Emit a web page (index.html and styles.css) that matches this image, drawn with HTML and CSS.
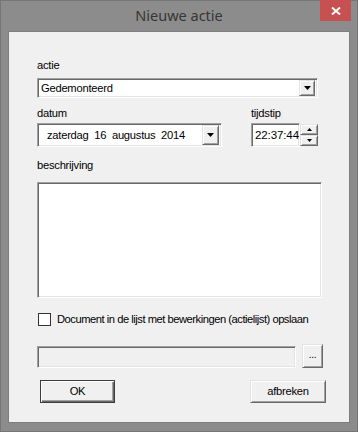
FILE: index.html
```html
<!DOCTYPE html>
<html lang="nl">
<head>
  <meta charset="UTF-8" />
  <title>Nieuwe actie</title>
  <link rel="stylesheet" href="styles.css">
</head>
<body>
  <div class="window">
    <div class="titlebar">
      <span></span>
      <span class="title">Nieuwe actie</span>
      <div class="close-btn">
        <svg width="10" height="8" viewBox="0 0 10 8"><path d="M1 0.5 L9 7.5 M9 0.5 L1 7.5" stroke="#fff" stroke-width="2"/></svg>
      </div>
    </div>

    <div class="client">
      <div class="label">actie</div>
      <div class="combo sunken">
        <span class="combo-text">Gedemonteerd</span>
        <div class="drop-btn raised">
          <svg width="7" height="4" viewBox="0 0 7 4"><path d="M0 0 H7 L3.5 4 Z" fill="#000"/></svg>
        </div>
      </div>

      <div class="date-row">
        <div class="date-col">
          <div class="label">datum</div>
          <div class="datebox sunken">
            <span class="date-text">zaterdag  16  augustus  2014</span>
            <div class="date-btn raised">
              <svg width="7" height="4" viewBox="0 0 7 4"><path d="M0 0 H7 L3.5 4 Z" fill="#000"/></svg>
            </div>
          </div>
        </div>
        <div class="time-col">
          <div class="label">tijdstip</div>
          <div class="timebox">
            <div class="time-edit sunken">22:37:44</div>
            <div class="spinner">
              <div class="spin-btn raised">
                <svg width="5" height="3" viewBox="0 0 5 3"><path d="M0 3 H5 L2.5 0 Z" fill="#000"/></svg>
              </div>
              <div class="spin-btn raised">
                <svg width="5" height="3" viewBox="0 0 5 3"><path d="M0 0 H5 L2.5 3 Z" fill="#000"/></svg>
              </div>
            </div>
          </div>
        </div>
      </div>

      <div class="label desc-label">beschrijving</div>
      <div class="memo sunken"></div>

      <div class="check-row">
        <div class="checkbox"></div>
        <span class="check-text">Document in de lijst met bewerkingen (actielijst) opslaan</span>
      </div>

      <div class="path-row">
        <div class="path-field sunken"></div>
        <div class="browse-btn raised">...</div>
      </div>

      <div class="button-row">
        <div class="btn btn-default">OK</div>
        <div class="btn raised">afbreken</div>
      </div>
    </div>
  </div>
</body>
</html>
```

FILE: styles.css
```css
* {
  box-sizing: border-box;
}

body {
  margin: 0;
  font-family: "Liberation Sans", Arial, sans-serif;
  font-size: 11.2px;
  letter-spacing: -0.25px;
  color: #000;
  background: #fff;
}

.window {
  width: 358px;
  height: 432px;
  background: #8c8c8c;
  box-shadow: inset 0 0 0 1px #767676;
  display: flex;
  flex-direction: column;
}

/* title bar */

.titlebar {
  height: 31px;
  display: grid;
  grid-template-columns: 1fr auto 1fr;
}

.title {
  font-family: "Noto Sans", "Open Sans", sans-serif;
  font-size: 14.5px;
  letter-spacing: 0;
  color: #363636;
  line-height: 30px;
}

.close-btn {
  justify-self: end;
  width: 31px;
  height: 21px;
  margin-right: 7px;
  background: #c75050;
  display: flex;
  align-items: center;
  justify-content: center;
}

/* client area */

.client {
  margin: 0 8px;
  height: 392px;
  background: #f0f0f0;
  border: 1px solid #7e7e7e;
  padding: 26px 0 0 28px;
}

.label {
  line-height: 14px;
  height: 14px;
  margin-bottom: 6px;
}

.sunken {
  background: #fff;
  border: 1px solid;
  border-color: #a0a0a0 #fff #fff #a0a0a0;
  box-shadow: inset 1px 1px 0 #696969, inset -1px -1px 0 #e3e3e3;
}

.raised {
  background: #f0f0f0;
  border: 1px solid;
  border-color: #e3e3e3 #696969 #696969 #e3e3e3;
  box-shadow: inset 1px 1px 0 #fff, inset -1px -1px 0 #a0a0a0;
}

.combo {
  width: 281px;
  height: 20px;
  display: flex;
  align-items: center;
  padding: 0 2px 0 3px;
}

.combo-text {
  flex: 1;
  line-height: 16px;
}

.drop-btn {
  width: 16px;
  height: 16px;
  display: flex;
  align-items: center;
  justify-content: center;
}

.date-row {
  display: flex;
  margin-top: 8px;
}

.date-row .label {
  margin-bottom: 3px;
}

.time-col {
  margin-left: 29px;
}

.datebox {
  width: 185px;
  height: 24px;
  display: flex;
  align-items: center;
  padding: 0 2px 0 9px;
}

.date-text {
  flex: 1;
  white-space: pre;
}

.date-btn {
  width: 17px;
  height: 20px;
  display: flex;
  align-items: center;
  justify-content: center;
}

.timebox {
  display: flex;
  height: 24px;
}

.time-edit {
  width: 49px;
  height: 24px;
  line-height: 22px;
  padding-left: 3px;
  font-size: 11.5px;
  letter-spacing: -0.1px;
}

.spinner {
  width: 18px;
  display: flex;
  flex-direction: column;
  padding: 1px 0;
}

.spin-btn {
  flex: 1;
  display: flex;
  align-items: center;
  justify-content: center;
}

.desc-label {
  margin-top: 11px;
  margin-bottom: 10px;
}

.memo {
  width: 285px;
  height: 116px;
}

.check-row {
  margin-top: 14px;
  height: 14px;
  display: flex;
  align-items: center;
  gap: 6px;
  padding-left: 1px;
  white-space: nowrap;
}

.check-text {
  letter-spacing: -0.48px;
}

.checkbox {
  width: 13px;
  height: 13px;
  background: #fff;
  border: 1px solid #333;
}

.path-row {
  margin-top: 18px;
  display: flex;
  align-items: flex-end;
  gap: 6px;
}

.path-field {
  width: 259px;
  height: 22px;
  background: #f0f0f0;
}

.browse-btn {
  width: 21px;
  height: 24px;
  text-align: center;
  line-height: 20px;
  font-size: 10px;
}

.button-row {
  margin-top: 12px;
  width: 289px;
  padding-left: 3px;
  display: flex;
  justify-content: space-between;
}

.btn {
  width: 76px;
  height: 23px;
  text-align: center;
  line-height: 20px;
}

.btn-default {
  width: 75px;
  background: #f0f0f0;
  border: 1px solid #3c3c3c;
  box-shadow: inset 1px 1px 0 #fff, inset -1px -1px 0 #696969, inset -2px -2px 0 #a0a0a0;
}
```
